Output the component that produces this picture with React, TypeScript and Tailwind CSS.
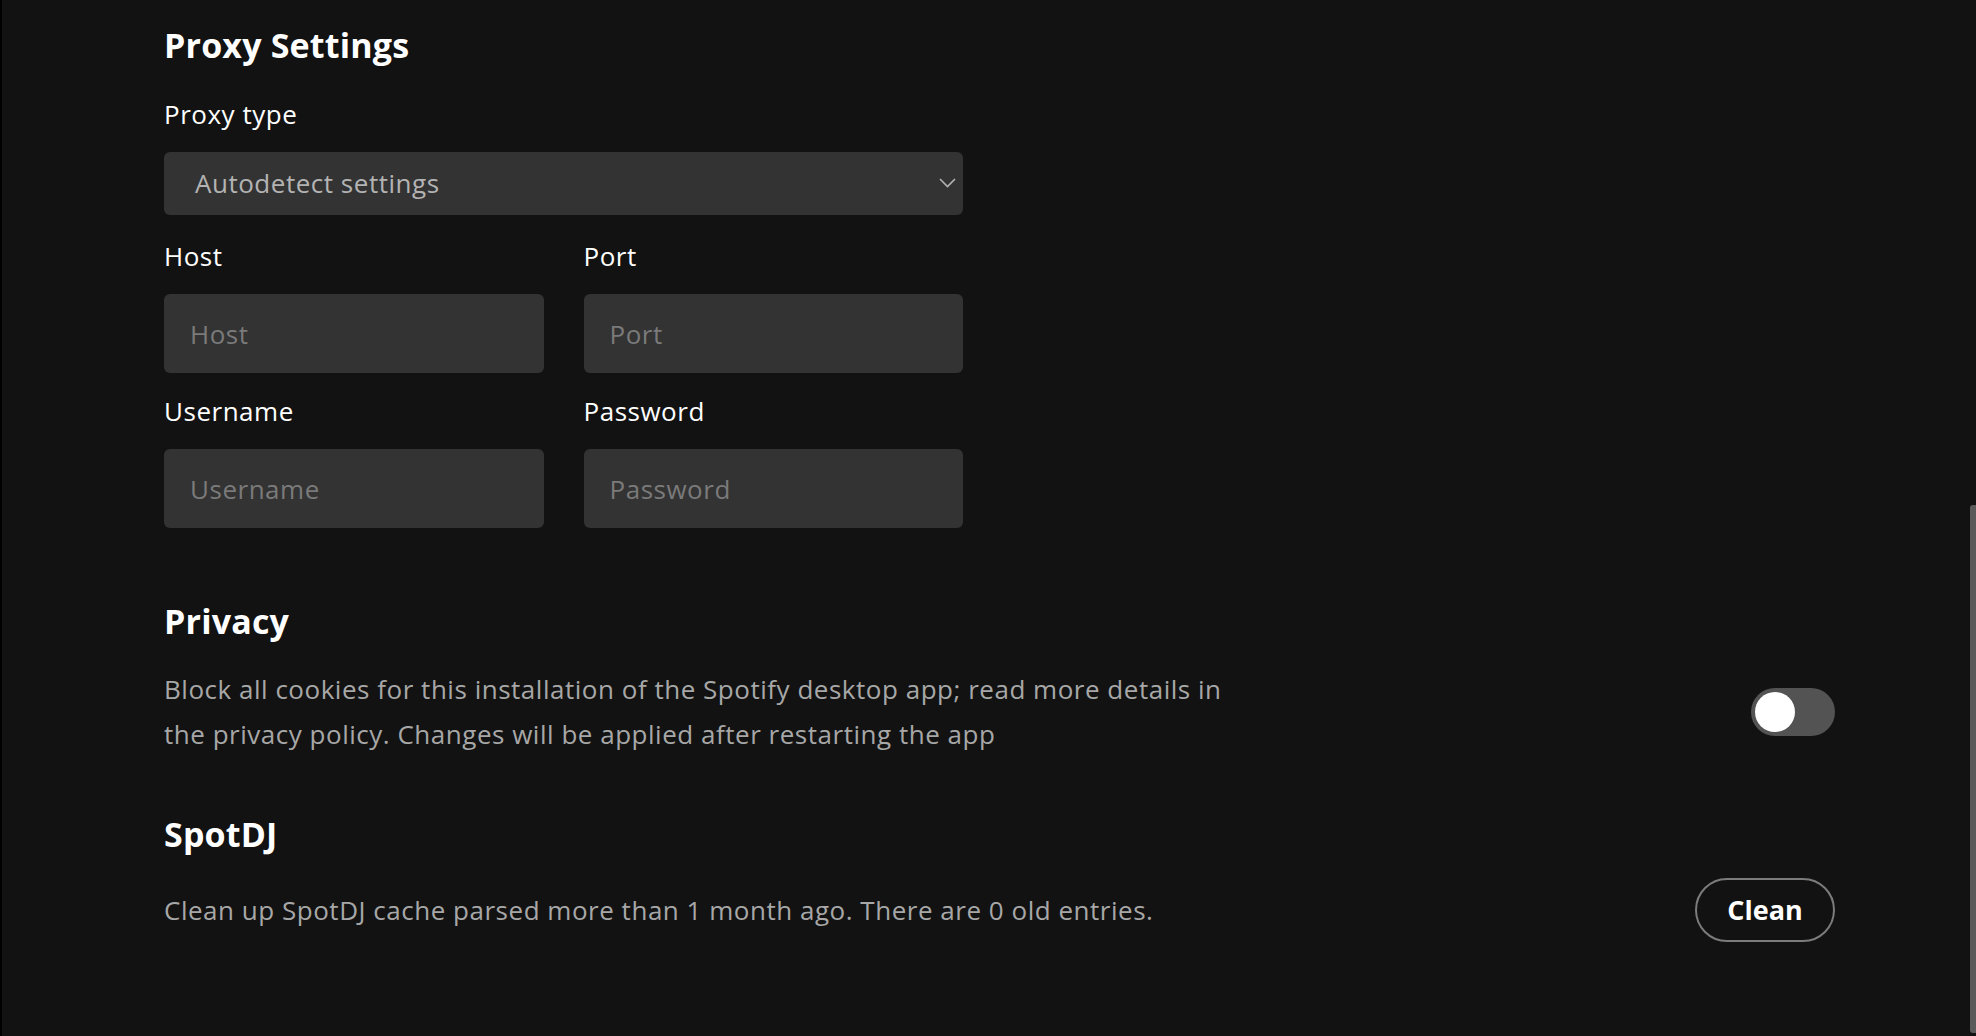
import React from 'react';

const font = { fontFamily: '"Open Sans", "Liberation Sans", Arial, sans-serif' };

function Field({ label, placeholder }: { label: string; placeholder: string }) {
  return (
    <div className="flex flex-col">
      <label className="text-[26px] leading-[32px] tracking-[0.02em] text-white font-medium">{label}</label>
      <input
        placeholder={placeholder}
        className="mt-[22px] h-[79px] w-full rounded-[6px] bg-[#333333] px-[26px] text-[26px] tracking-[0.02em] text-white placeholder:text-[#7a7a7a] outline-none"
      />
    </div>
  );
}

function SectionTitle({ children }: { children: React.ReactNode }) {
  return <h2 className="text-[34px] leading-[40px] tracking-[0.005em] font-bold text-white">{children}</h2>;
}

export default function App() {
  return (
    <div className="relative flex h-[1036px] w-full overflow-hidden bg-[#121212]" style={font}>
      <div className="w-[2px] shrink-0 bg-black" />
      <main className="flex-1 pl-[162px] pr-[141px] pt-[25px]">
        <SectionTitle>Proxy Settings</SectionTitle>

        <div className="w-[799px]">
          <label className="mt-[33px] block text-[26px] leading-[32px] tracking-[0.02em] text-white font-medium">
            Proxy type
          </label>
          <div className="relative mt-[22px] flex h-[63px] items-center rounded-[6px] bg-[#333333] pl-[31px] pr-[20px]">
            <span className="text-[26px] tracking-[0.02em] text-[#b3b3b3]">Autodetect settings</span>
            <svg
              className="absolute right-[7px] top-[26px]"
              width="17"
              height="10"
              viewBox="0 0 17 10"
              fill="none"
            >
              <path d="M1 1l7.5 7.5L16 1" stroke="#b3b3b3" strokeWidth="1.6" />
            </svg>
          </div>

          <div className="mt-[25px] grid grid-cols-2 gap-x-[40px] gap-y-[22px]">
            <Field label="Host" placeholder="Host" />
            <Field label="Port" placeholder="Port" />
            <Field label="Username" placeholder="Username" />
            <Field label="Password" placeholder="Password" />
          </div>
        </div>

        <section className="mt-[73px]">
          <SectionTitle>Privacy</SectionTitle>
          <div className="mt-[26px] flex items-center justify-between">
            <p className="max-w-[1080px] text-[26px] leading-[45px] tracking-[0.02em] text-[#a7a7a7]">
              Block all cookies for this installation of the Spotify desktop app; read more details in the
              privacy policy. Changes will be applied after restarting the app
            </p>
            <button className="flex h-[48px] w-[84px] items-center rounded-full bg-[#535353] p-[4px]">
              <span className="h-[40px] w-[40px] rounded-full bg-white" />
            </button>
          </div>
        </section>

        <section className="mt-[57px]">
          <SectionTitle>SpotDJ</SectionTitle>
          <div className="mt-[24px] flex items-center justify-between">
            <p className="text-[26px] leading-[45px] tracking-[0.02em] text-[#a7a7a7]">
              Clean up SpotDJ cache parsed more than 1 month ago. There are 0 old entries.
            </p>
            <button className="h-[64px] w-[140px] rounded-full border-2 border-[#7c7c7c] text-[27px] font-bold text-white">
              Clean
            </button>
          </div>
        </section>
      </main>

      <div className="absolute right-0 top-[505px] h-[528px] w-[6px] rounded-l-[3px] bg-[#5a5a5a]" />
    </div>
  );
}
